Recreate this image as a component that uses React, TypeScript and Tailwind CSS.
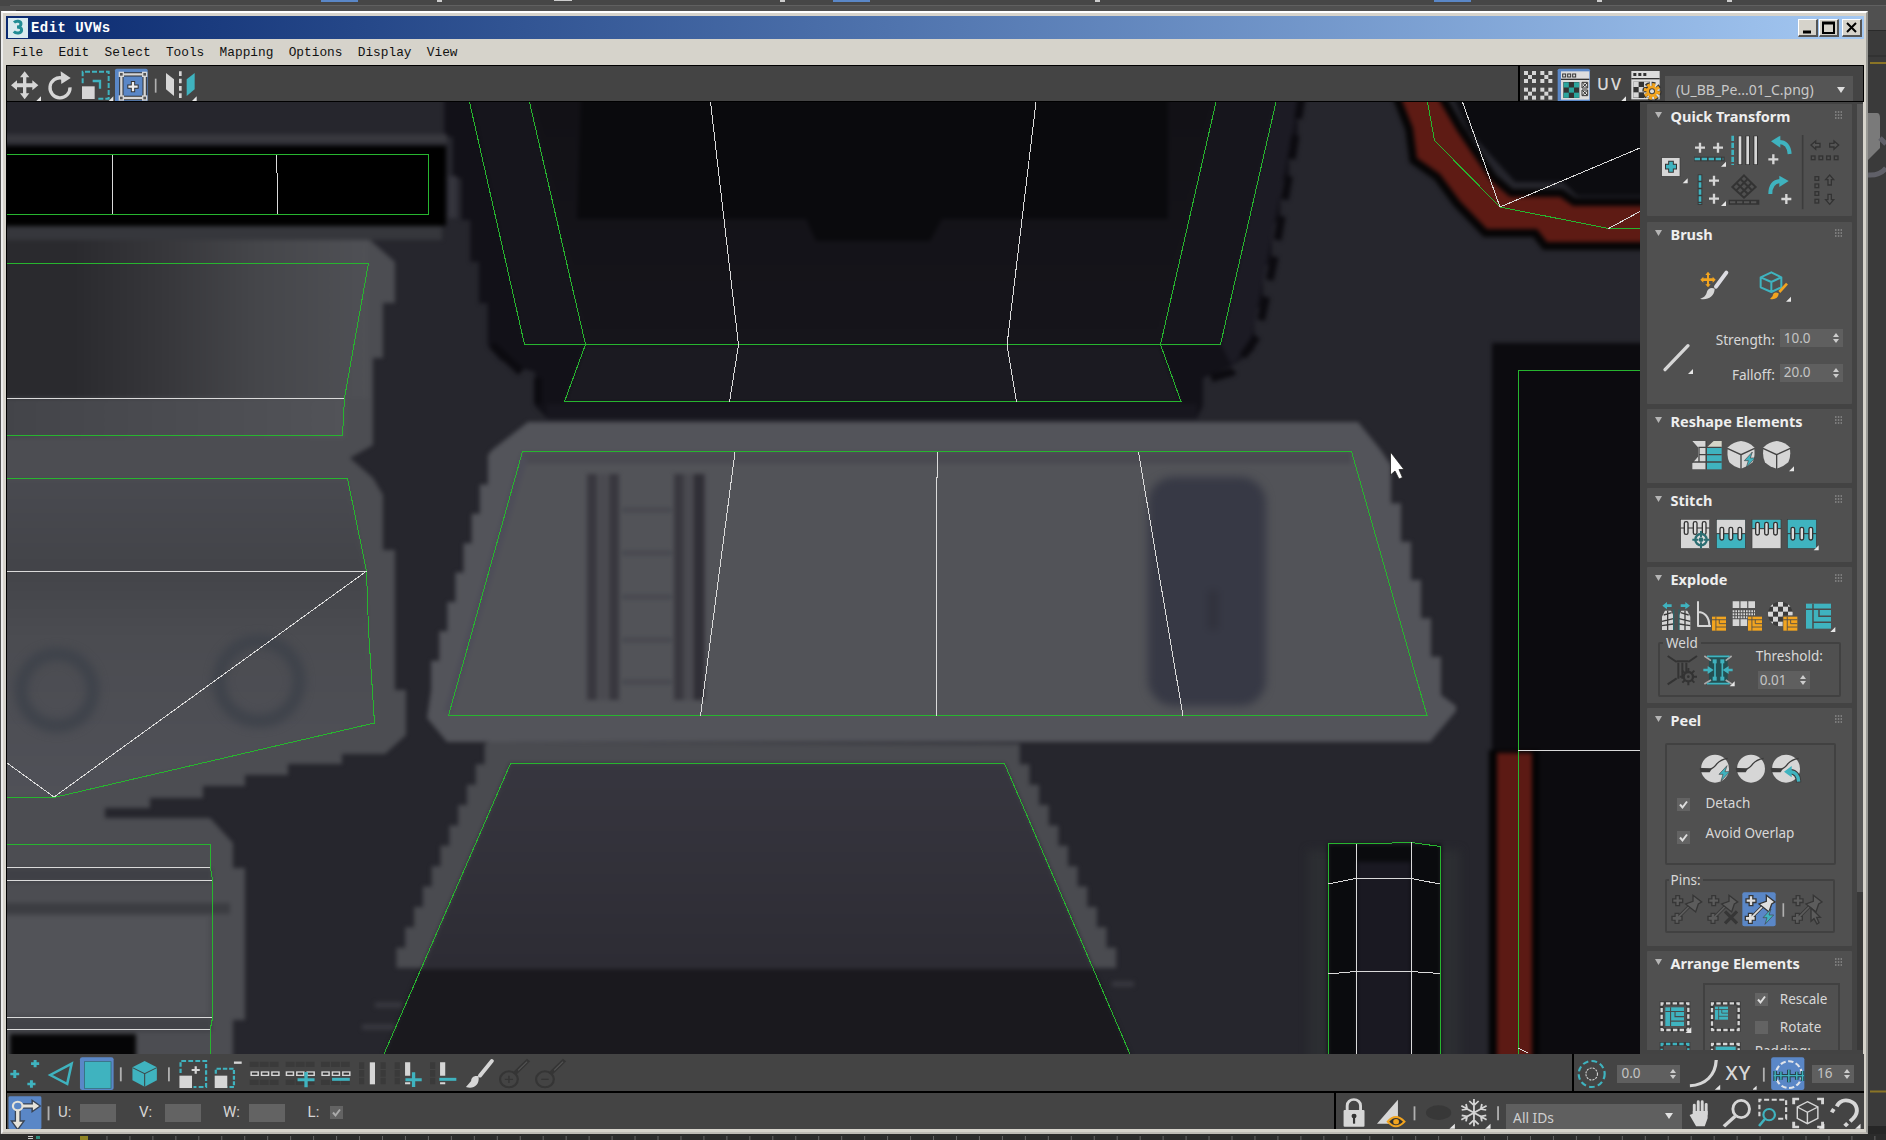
import React from "react";

type Kids = { children?: React.ReactNode };

const W = "#d6d6d6";
const TEAL = "#3fb3bf";
const ORANGE = "#f2a41f";
const BLUE = "#5a87c7";
const DARK = "#353535";

/* ---------- icon primitives ---------- */

type TileProps = Kids & { x: number; y: number; w: number; h: number; sx?: number };

/** Icon cell: draws a window of a 3x icon sheet at its natural size. */
function Tile({ x, y, w, h, sx = 3, children }: TileProps) {
  return (
    <svg
      className="block shrink-0"
      width={w / sx}
      height={h / 3}
      viewBox={`${x} ${y} ${w} ${h}`}
      preserveAspectRatio="none"
      fill="none"
    >
      {children}
    </svg>
  );
}

function Plus({ x, y, r = 15, t = 7, c = W }: { x: number; y: number; r?: number; t?: number; c?: string }) {
  return <path d={`M${x - r} ${y}H${x + r}M${x} ${y - r}V${y + r}`} stroke={c} strokeWidth={t} />;
}

/** Small flyout triangle; (x, y) is its bottom right corner. */
function Fly({ x, y, r = 15 }: { x: number; y: number; r?: number }) {
  return <path d={`M${x} ${y}H${x - r}L${x} ${y - r}Z`} fill="#e6e6e6" />;
}

function Sep({ x, y, h = 42 }: { x: number; y: number; h?: number }) {
  return <path d={`M${x} ${y}v${h}`} stroke="#b0b0b0" strokeWidth="5" />;
}

function Checker({ x, y, s, c = W }: { x: number; y: number; s: number; c?: string }) {
  const cells = [0, 2, 4, 6, 8];
  return (
    <g fill={c}>
      {cells.map((n) => (
        <rect key={n} x={x + (n % 3) * s} y={y + Math.floor(n / 3) * s} width={s} height={s} />
      ))}
    </g>
  );
}

function Bolt({ x, y }: { x: number; y: number }) {
  return <path d={`M${x + 24} ${y}L${x} ${y + 26}H${x + 12}L${x + 6} ${y + 46}L${x + 32} ${y + 18}H${x + 18}Z`} fill={TEAL} stroke="#444" strokeWidth="2" />;
}

function Maze({ x, y, s, c }: { x: number; y: number; s: number; c: string }) {
  return (
    <g>
      <rect x={x} y={y} width={s} height={s} fill={c} />
      <path
        d={`M${x + s * 0.28} ${y}V${y + s}M${x} ${y + s * 0.22}H${x + s}M${x + s * 0.28} ${y + s * 0.74}H${x + s}M${x + s * 0.52} ${y + s * 0.22}V${y + s * 0.5}H${x + s}`}
        stroke="#4a4a4a"
        strokeWidth={s * 0.06}
      />
    </g>
  );
}

/* ---------- window chrome ---------- */

function TitleButton({ children }: Kids) {
  return (
    <div className="h-[18px] w-[20px] shrink-0 border-t border-l border-r-2 border-b-2 border-t-white border-l-white border-r-[#555] border-b-[#555] bg-[#d6d3cb]">
      <svg className="block" width="17" height="15" viewBox="0 0 17 15" fill="none" stroke="#000" strokeWidth="2">
        {children}
      </svg>
    </div>
  );
}

function TitleBar() {
  return (
    <div className="flex h-[23px] shrink-0 items-center bg-linear-to-r from-[#0b2a70] to-[#a4c8f2] pr-[2px] pl-[2px]">
      <svg className="shrink-0" width="20" height="20" viewBox="0 0 20 20" fill="none">
        <rect width="20" height="20" fill="#d9eaee" />
        <path d="M6 4.500C8 2.600 13 2.800 13 6C13 8.600 10 9 9 9C10.500 9 13.600 9.500 13.600 12C13.600 15.500 8 15.800 5.800 13.500" stroke="#218c94" strokeWidth="3" />
      </svg>
      <span className="mt-[2px] ml-[3px] font-['Liberation_Mono',monospace] text-[14px] font-bold tracking-[0.45px] whitespace-pre text-white">Edit UVWs</span>
      <div className="ml-auto flex">
        <TitleButton><path d="M4 12H12" strokeWidth="3" /></TitleButton>
        <div className="ml-px flex">
          <TitleButton><path d="M3 2.500H14V13H3ZM3 3.500H14" /></TitleButton>
        </div>
        <div className="ml-[3px] flex">
          <TitleButton><path d="M4 3L13 12M13 3L4 12" /></TitleButton>
        </div>
      </div>
    </div>
  );
}

const MENUS = ["File", "Edit", "Select", "Tools", "Mapping", "Options", "Display", "View"];

function MenuBar() {
  return (
    <div className="flex h-[26px] shrink-0 items-center gap-[15.300px] bg-[#d6d3cb] pt-[2px] pl-[6.500px] font-['Liberation_Mono',monospace] text-[12.800px] text-[#111]">
      {MENUS.map((m) => (
        <span key={m}>{m}</span>
      ))}
    </div>
  );
}

function TopToolbar() {
  return (
    <div className="flex h-[37px] shrink-0 overflow-hidden border border-black bg-[#444]">
      <div className="-mt-px -ml-px flex">
        <Tile x={18} y={195} w={114} h={111}>
          <path d="M74 214l14 18h-9v18h18v-9l18 15l-18 15v-9h-18v18h9l-14 18l-14-18h9v-18h-18v9l-18-15l18-15v9h18v-18h-9z" fill={W} />
          <Fly x={123} y={304} />
        </Tile>
        <Tile x={132} y={195} w={102} h={111}>
          <path d="M186 234A30 30 0 1 0 210 262" stroke={W} strokeWidth="10" />
          <path d="M182 214L212 234L184 252Z" fill={W} />
        </Tile>
        <Tile x={234} y={195} w={108} h={111}>
          <path d="M248 250V215H326V296H290" stroke={TEAL} strokeWidth="6" strokeDasharray="15 6" />
          <path d="M278 243H300V266" stroke={TEAL} strokeWidth="7" />
          <rect x="246" y="259" width="38" height="38" fill={W} />
          <Fly x={340} y={304} />
        </Tile>
        <Tile x={342} y={195} w={108} h={111}>
          <rect x="345" y="206" width="98" height="100" rx="5" fill={BLUE} />
          <path d="M364 223H434V294H364Z" stroke="#333" strokeWidth="13" />
          <path d="M364 223H434V294H364Z" stroke={W} strokeWidth="7" />
          {[[364, 223], [434, 223], [364, 294], [434, 294]].map(([a, b]) => (
            <rect key={`${a}-${b}`} x={a - 6} y={b - 6} width="12" height="12" fill="#555" stroke={W} strokeWidth="4" />
          ))}
          <Plus x={399} y={260} r={17} t={13} c="#333" />
          <Plus x={399} y={260} r={14} t={7} c="#eee" />
        </Tile>
        <Tile x={450} y={195} w={36} h={111}><Sep x={467} y={236} /></Tile>
        <Tile x={486} y={195} w={120} h={111}>
          <path d="M498 219L522 238V288L498 268Z" fill={W} />
          <path d="M541 214V298" stroke={W} strokeWidth="8" strokeDasharray="14 8" />
          <path d="M584 219L560 238V288L584 268Z" fill={TEAL} />
          <Fly x={590} y={304} />
        </Tile>
      </div>
      <div className="-mt-px -mr-px ml-auto flex items-start">
        <div className="mt-px h-[36px] w-[2px] bg-black" />
        <Tile x={63} y={195} w={108} h={111}>
          {[[75, 213], [124, 213], [75, 263], [124, 263]].map(([a, b]) => (
            <Checker key={`${a}-${b}`} x={a} y={b} s={12} />
          ))}
        </Tile>
        <Tile x={171} y={195} w={114} h={111}>
          <rect x="176" y="206" width="97" height="100" rx="5" fill={BLUE} />
          <rect x="186" y="214" width="85" height="85" fill="#ddd" />
          <path d="M186 238H271" stroke="#333" strokeWidth="4" />
          {[191, 206, 221].map((n) => <rect key={n} x={n} y="222" width="9" height="9" stroke="#333" strokeWidth="3" />)}
          <rect x="193" y="246" width="48" height="48" fill="#333" />
          <Checker x={194} y={247} s={15.500} c="#2ba59d" />
          <path d="M249 247h17v17h-17zM249 270h17v17h-17zM251 249l13 13M264 249l-13 13M251 272l13 13M264 272l-13 13" stroke="#333" strokeWidth="3" />
        </Tile>
        <div className="flex h-[37px] w-[27px] items-start pt-[8px] pl-[3px] font-['Open_Sans',sans-serif] text-[16px] leading-[22px] font-semibold tracking-[2px] text-[#d8d8d8]">UV</div>
        <Tile x={366} y={195} w={24} h={111}><Fly x={381} y={304} /></Tile>
        <Tile x={390} y={195} w={108} h={111}>
          <rect x="397" y="213" width="85" height="85" fill="#ddd" />
          <path d="M397 236H482" stroke="#333" strokeWidth="4" />
          {[403, 418, 433].map((n) => <rect key={n} x={n} y="219" width="9" height="9" fill="#333" />)}
          <rect x="403" y="245" width="50" height="49" fill="#333" />
          <Checker x={403} y={245} s={16} />
          <circle cx="459" cy="274" r="22" stroke="#333" strokeWidth="14" strokeDasharray="10 7" />
          <circle cx="459" cy="274" r="20" stroke={ORANGE} strokeWidth="10" strokeDasharray="9 6.700" />
          <circle cx="459" cy="274" r="13" fill="#444" stroke={ORANGE} strokeWidth="8" />
          <circle cx="459" cy="274" r="6" fill="#ddd" />
        </Tile>
        <div className="mt-[11px] flex h-[25px] w-[188px] items-center justify-between bg-[#555] pt-[2px] pr-[8px] pl-[11px] text-[#c9c9c9]">
          <span className="text-[14px] leading-none">(U_BB_Pe...01_C.png)</span>
          <svg width="8" height="8" viewBox="0 0 8 8"><path d="M0 1H8L4 7Z" fill="#ddd" /></svg>
        </div>
        <div className="w-[11px]" />
      </div>
    </div>
  );
}

/* ---------- UV canvas ---------- */

/** Stair-stepped run between two points, quantised like enlarged texels. */
function stairs(x1: number, y1: number, x2: number, y2: number, n: number) {
  let d = "";
  for (let i = 0; i < n; i++) {
    const a = x1 + ((x2 - x1) * (i + 0.5)) / n;
    d += `L${a} ${y1 + ((y2 - y1) * i) / n}L${a} ${y1 + ((y2 - y1) * (i + 1)) / n}`;
  }
  return d;
}

const PLATE =
  "M528 422L492 450" + stairs(492, 455, 427, 690, 8) + "L427 718L447 742H1430L1456 711V706L1448 700" + stairs(1446, 695, 1386, 465, 6) + "L1380 449L1358 422Z";
const LOWER = "M489 742" + stairs(489, 744, 392, 968, 11) + "H1120" + stairs(1121, 968, 1015, 744, 11) + "Z";
const UPPER =
  "M440 95" + stairs(440, 95, 492, 345, 6) + "L500 360L521 368L535 372V406L547 418H1197L1203 406V378L1232 366" + stairs(1250, 350, 1302, 95, 6) + "Z";
const LEFT =
  "M0 240H370L395 262V303H383V358H373V445L350 458L373 478L383 495V550H395V690H406V735L385 754H342V764H288V775H245V786H203V798H150V808H105V818H210L233 843V868H245V1020H233V1060H0Z";

const GREEN = [
  "M7 154.500H428.500V214.500H7",
  "M7 263H368.500L344.500 398L342.500 435.500H7",
  "M7 478.500H347.500L366.500 571L368.500 630L374.500 723L54 797.500H7",
  "M7 844.500H210.500V868L212.500 880V1018L210.500 1028V1054",
  "M469.500 102L524.500 344.500H1220.500L1276 102",
  "M529.500 102L585.500 344.500L564.500 401.500H1181L1160.500 344.500L1216 102",
  "M522.500 451.500H1351.500L1427 715.500H448.500Z",
  "M384 1054L510.500 763.500H1004.500L1130 1054",
  "M1427.500 102L1434.500 140.500L1500 207L1608.500 228.500H1640",
  "M1640 370.500H1518.500V1054",
  "M1328.500 1054V843.500H1373L1411 842.500L1440.500 846.500V1054",
];

const WHITE = [
  "M112.500 155V214M276.500 155V173M277.500 173V214",
  "M7 398.500H344",
  "M7 571.500H366L54 797L7 763",
  "M7 867.500H210M7 880.500H212M7 1017.500H212M7 1029.500H210",
  "M710.500 102L738.500 345L729.500 402M1036 102L1007 345L1016.500 402",
  "M735 452L700.500 716M937.500 452V475L936.500 480V716M1138.500 452L1183 716",
  "M1462.500 102L1500 207L1640 148M1608.500 228.500L1640 211.500",
  "M1518 750.500H1640M1518 1048L1528 1053",
  "M1356.500 844V1054M1411.500 842V1054M1328 884L1356 878.500H1411L1440 884M1328 974L1356 971.500H1411L1440 973.500",
];

const RED_OUTER = "M1400 95L1413 128L1417 158L1440 174L1460 201L1487 229H1537L1547 242H1660V206H1573L1560 197H1510L1490 180L1457 131L1436 95Z";

function UvCanvas() {
  return (
    <svg className="block shrink-0" width="1633" height="952" viewBox="7 102 1633 952" fill="none">
      <defs>
        <filter id="soft" x="-5%" y="-5%" width="110%" height="110%" colorInterpolationFilters="sRGB"><feGaussianBlur stdDeviation="2.200" /></filter>
        <filter id="haze" x="-20%" y="-20%" width="140%" height="140%" colorInterpolationFilters="sRGB"><feGaussianBlur stdDeviation="4" /></filter>
        <linearGradient id="leftTop" x1="0" x2="1"><stop offset="0.2" stopColor="#2a2a2e" /><stop offset="0.45" stopColor="#37373b" /><stop offset="0.7" stopColor="#45464a" /><stop offset="1" stopColor="#4f5055" /></linearGradient>
        <linearGradient id="leftStrip" x1="0" x2="1"><stop offset="0" stopColor="#434449" /><stop offset="1" stopColor="#525358" /></linearGradient>
        <linearGradient id="leftMid" x1="0" x2="0" y1="0" y2="1"><stop offset="0" stopColor="#494a50" /><stop offset="0.28" stopColor="#434449" /><stop offset="0.5" stopColor="#4b4c51" /><stop offset="1" stopColor="#505158" /></linearGradient>
        <linearGradient id="trap" x1="0" x2="0" y1="0" y2="1"><stop offset="0" stopColor="#37363f" /><stop offset="1" stopColor="#2d2c34" /></linearGradient>
        <linearGradient id="dark" x1="0" x2="0" y1="0" y2="1"><stop offset="0" stopColor="#121116" /><stop offset="1" stopColor="#16151b" /></linearGradient>
      </defs>
      <rect x="7" y="102" width="1633" height="952" fill="#26262d" />

      <g filter="url(#soft)">
        <path d={UPPER} fill="#121118" />
        <path d="M1276 95L1221 345L1232 366L1250 345L1300 95Z" fill="#1c1b24" />
        <path d="M471 95L524 345H1220L1276 95Z" fill="#16151c" />
        <path d="M530 95L585 345H1160L1216 95Z" fill="url(#dark)" />
        <path d="M581 95H1168V219H942L930 241H816L806 219H577Z" fill="#0a0a0d" />
        <path d="M585 346H1160L1181 402H565Z" fill="#1b1a21" />
        <path d="M547 404H1197V419H547Z" fill="#17161e" />
        <path d="M1302 95L1290 170L1274 260L1258 335L1232 372L1205 380" stroke="#0c0b10" strokeWidth="8" strokeDasharray="24 17" />
        <path d="M492 345L521 372M538 378V404" stroke="#0c0b10" strokeWidth="8" />

        <path d={LEFT} fill="#4c4d52" />
        <rect x="0" y="240" width="368" height="158" fill="url(#leftTop)" />
        <rect x="0" y="398" width="345" height="40" fill="url(#leftStrip)" />
        <path d="M0 479H348L366 572L374 723L54 797H0Z" fill="url(#leftMid)" />
        <rect x="0" y="134" width="447" height="9" fill="#38383e" />
        <rect x="0" y="226" width="442" height="14" fill="#36373c" />
        <rect x="0" y="146" width="446" height="80" fill="#000" />
        <rect x="448" y="176" width="9" height="42" fill="#35353d" />
        <rect x="0" y="868" width="212" height="14" fill="#3f4046" />
        <rect x="0" y="903" width="230" height="11" fill="#3c3d42" />
        <rect x="0" y="917" width="208" height="98" fill="#525358" />
        <rect x="0" y="1018" width="212" height="14" fill="#414247" />
        <rect x="10" y="1034" width="126" height="30" fill="#050506" />
        <path d="M375 1005H402M362 1027H395M1112 984H1134" stroke="#37373e" strokeWidth="6" />
        <path d={LOWER} fill="#4a4b50" />
        <path d="M510 763H1005L1094 969H421Z" fill="url(#trap)" />
        <path d="M420 969H1094L1132 1060H382Z" fill="#1a191e" />

        <path d={PLATE} fill="#53545a" />
        <path d="M522 452H1351L1427 716H448Z" fill="#525358" />
        <path d="M522 458H1351" stroke="#4a4a51" strokeWidth="12" />
        <path d="M448 712L524 456" stroke="#4d4d58" strokeWidth="8" />
      </g>

      <g filter="url(#haze)">
        <circle cx="57" cy="690" r="36" stroke="#3f434b" strokeWidth="13" />
        <circle cx="259" cy="681" r="40" stroke="#3f434b" strokeWidth="13" />
        <rect x="1148" y="477" width="118" height="229" rx="26" fill="#373945" />
        <path d="M1213 590V630" stroke="#30313c" strokeWidth="10" />
        <rect x="1308" y="850" width="152" height="220" fill="#2c2e32" />
      </g>
      <g filter="url(#soft)">
        <path d="M592 474V700M614 474V700M679 474V700" stroke="#39383f" strokeWidth="10" />
        <path d="M699 474V700" stroke="#302f36" strokeWidth="11" />
        <path d="M603 474V700M688 474V700" stroke="#4a4a50" strokeWidth="9" />
        <path d="M622 510H672M622 553H672M622 597H672M622 640H672M622 682H672" stroke="#46474e" strokeWidth="4" />

        <path d={RED_OUTER} stroke="#060506" strokeWidth="16" fill="#5e1b14" />
        <path d="M1450 90L1468 130L1515 182H1563L1577 196H1660V90Z" fill="#0c0c10" />
        <path d={RED_OUTER} fill="#5e1b14" />
        <rect x="1492" y="343" width="170" height="730" fill="#0c0b0f" />
        <rect x="1489" y="750" width="50" height="330" fill="#030304" />
        <rect x="1497" y="753" width="35" height="320" fill="#5c1a14" />
        <rect x="1328" y="844" width="113" height="230" fill="#0a0b0e" />
        <rect x="1357" y="862" width="54" height="200" fill="#1a1922" />
      </g>

      <g stroke="#27b52f" strokeWidth="1" shapeRendering="crispEdges">
        {GREEN.map((d) => <path key={d} d={d} />)}
      </g>
      <g stroke="#dadada" strokeWidth="1" shapeRendering="crispEdges">
        {WHITE.map((d) => <path key={d} d={d} />)}
      </g>
      <path d="M1390.500 452V475L1395 471L1399 479L1402.500 477.500L1399 469.500H1404Z" fill="#fff" stroke="#222" strokeWidth="0.800" />
    </svg>
  );
}

/* ---------- side panel ---------- */

function Rollup({ title, className, children }: Kids & { title: string; className: string }) {
  return (
    <section className={`flex w-[205.300px] shrink-0 flex-col overflow-hidden rounded-[1px] bg-[#505050] ${className}`}>
      <header className="flex h-[26px] shrink-0 items-center pr-[10px] pb-[2px] pl-[8px]">
        <svg className="mb-[2px]" width="7" height="6" viewBox="0 0 7 6"><path d="M0 0H7L3.500 6Z" fill="#b5b5b5" /></svg>
        <h2 className="ml-[9px] text-[14.500px] leading-none font-bold whitespace-nowrap text-[#eee]">{title}</h2>
        <svg className="mb-[3px] ml-auto" width="8" height="8" viewBox="0 0 8 8">
          <path d="M1 1H8M1 4H8M1 7H8" stroke="#8a8a8a" strokeWidth="1.500" strokeDasharray="1.500 1.300" />
        </svg>
      </header>
      {children}
    </section>
  );
}

function Spinner({ value, className }: { value: string; className: string }) {
  return (
    <div className={`flex h-[18px] shrink-0 items-center justify-between bg-[#5f5f5f] pr-[4px] text-[13.500px] leading-none text-[#c4c4c4] ${className}`}>
      <span>{value}</span>
      <svg width="6" height="12" viewBox="0 0 6 12"><path d="M0 5L3 1L6 5ZM0 7L3 11L6 7Z" fill="#ccc" /></svg>
    </div>
  );
}

function Check({ on = true, dim = false }: { on?: boolean; dim?: boolean }) {
  return (
    <svg className="shrink-0" width="13" height="13" viewBox="0 0 13 13" fill="none">
      <rect width="13" height="13" fill="#636363" />
      {on && <path d="M3 6.500L5.500 9.500L10 3.500" stroke={dim ? "#aaa" : "#ddd"} strokeWidth="2" />}
    </svg>
  );
}

function QuickTransform() {
  return (
    <Rollup title="Quick Transform" className="h-[112px]">
      <div className="flex">
        <Tile x={32} y={90} w={133} h={258}>
          <rect x="76" y="173" width="55" height="56" fill={W} stroke="#383838" strokeWidth="2" />
          <Plus x={104} y={200} r={18} t={17} c="#333" />
          <Plus x={104} y={200} r={15} t={11} c={TEAL} />
          <Fly x={154} y={250} />
        </Tile>
        <div>
          <Tile x={165} y={90} w={110} h={120}>
            <Plus x={192} y={143} /><Plus x={246} y={143} />
            <rect x="174" y="170" width="92" height="14" fill="#3a3a3a" />
            <path d="M176 177H262" stroke={TEAL} strokeWidth="8" strokeDasharray="16 5" />
            <Fly x={270} y={200} />
          </Tile>
          <Tile x={165} y={210} w={110} h={138}>
            <rect x="185" y="223" width="14" height="92" fill="#3a3a3a" />
            <path d="M192 226V312" stroke={TEAL} strokeWidth="8" strokeDasharray="16 5" />
            <Plus x={234} y={242} /><Plus x={234} y={296} />
            <Fly x={270} y={318} />
          </Tile>
        </div>
        <div>
          <Tile x={275} y={90} w={110} h={120}>
            <path d="M314 107V195M337 107V195M361 107V195" stroke="#333" strokeWidth="14" />
            <path d="M292 107V195" stroke={TEAL} strokeWidth="8" strokeDasharray="16 5" />
            <path d="M314 109V193M337 109V193M361 109V193" stroke={W} strokeWidth="8" />
          </Tile>
          <Tile x={275} y={210} w={110} h={138}>
            <path d="M326 226L361 261L326 293L291 261ZM315 237L350 271M303 248L338 282M337 237L303 271M349 249L315 282" stroke="#333" strokeWidth="6" />
            <path d="M280 307H372" stroke="#333" strokeWidth="15" />
            <path d="M284 307H368" stroke="#555" strokeWidth="6" strokeDasharray="16 5" />
          </Tile>
        </div>
        <div>
          <Tile x={385} y={90} w={105} h={120}>
            <path d="M462 162C460 138 448 126 430 126" stroke={TEAL} strokeWidth="12" />
            <path d="M406 124L434 107V143Z" fill={TEAL} />
            <Plus x={413} y={178} />
          </Tile>
          <Tile x={385} y={210} w={105} h={138}>
            <path d="M404 282C404 256 416 244 436 243" stroke={TEAL} strokeWidth="12" />
            <path d="M459 243L431 227V261Z" fill={TEAL} />
            <Plus x={452} y={297} />
          </Tile>
        </div>
        <Tile x={490} y={90} w={30} h={258}><path d="M501 105V328" stroke="#3c3c3c" strokeWidth="5" /></Tile>
        <div>
          <Tile x={520} y={90} w={110} h={120}>
            <path d="M526 135L540 123V130H553V141H540V148ZM609 135L595 123V130H582V141H595V148Z" fill="#555" stroke="#333" strokeWidth="4" />
            {[527, 550, 573, 596].map((n) => <rect key={n} x={n} y="168" width="11" height="11" stroke="#333" strokeWidth="4" />)}
          </Tile>
          <Tile x={520} y={210} w={110} h={138}>
            {[230, 252, 275, 298].map((n) => <rect key={n} x="538" y={n} width="11" height="11" stroke="#333" strokeWidth="4" />)}
            <path d="M582 225L594 239H587V255H577V239H570ZM582 313L594 299H587V283H577V299H570Z" fill="#555" stroke="#333" strokeWidth="4" />
          </Tile>
        </div>
      </div>
    </Rollup>
  );
}

function Brush() {
  return (
    <Rollup title="Brush" className="mt-[6px] h-[182px]">
      <div className="flex pl-[49px]">
        <Tile x={180} y={444} w={150} h={196}>
          <path d="M216 515l8 10h-5v10h11v-5l9 9l-9 9v-5h-11v10h5l-8 9l-8-9h5v-10h-11v5l-9-9l9-9v5h11v-10h-5z" fill={ORANGE} />
          <path d="M271 518L240 560" stroke="#dcdce2" strokeWidth="12" strokeLinecap="round" />
          <path d="M236 566C226 560 214 566 212 578C208 590 200 594 192 596C212 602 236 590 236 566Z" fill={W} />
        </Tile>
        <Tile x={330} y={444} w={150} h={196}>
          <path d="M406 517L436 532V562L406 576L374 562V532ZM374 532L406 546L436 532M406 546V576" stroke={TEAL} strokeWidth="6" strokeLinejoin="round" />
          <path d="M453 551L430 576" stroke={ORANGE} strokeWidth="8" />
          <path d="M428 580C418 574 410 580 410 588L402 597C416 600 428 594 428 580Z" fill={ORANGE} />
          <Fly x={465} y={605} />
        </Tile>
      </div>
      <div className="flex">
        <Tile x={32} y={640} w={148} h={270}>
          <path d="M86 810L155 738" stroke={W} strokeWidth="10" strokeLinecap="round" />
          <Fly x={170} y={823} />
        </Tile>
        <div className="flex flex-1 flex-col gap-[16.500px] pt-[16px] pr-[9px]">
          <div className="flex items-center justify-end text-[13.600px] leading-none text-[#d8d8d8]">
            <span className="pt-[3px]">Strength:</span><Spinner value="10.0" className="ml-[5px] w-[63px] pl-[4px]" />
          </div>
          <div className="flex items-center justify-end text-[13.600px] leading-none text-[#d8d8d8]">
            <span className="pt-[3px]">Falloff:</span><Spinner value="20.0" className="ml-[5px] w-[63px] pl-[4px]" />
          </div>
        </div>
      </div>
    </Rollup>
  );
}

function Cube({ x, y }: { x: number; y: number }) {
  return (
    <g>
      <path d={`M${x + 41} ${y}Q${x + 65} ${y + 2} ${x + 80} ${y + 19}Q${x + 85} ${y + 45} ${x + 76} ${y + 64}Q${x + 60} ${y + 78} ${x + 41} ${y + 83}Q${x + 20} ${y + 78} ${x + 6} ${y + 64}Q${x - 3} ${y + 45} ${x + 2} ${y + 19}Q${x + 18} ${y + 2} ${x + 41} ${y}Z`} fill={W} />
      <path d={`M${x} ${y + 22}L${x + 41} ${y + 41}L${x + 82} ${y + 22}M${x + 41} ${y + 41}V${y + 84}`} stroke="#444" strokeWidth="4" />
    </g>
  );
}

function Reshape() {
  return (
    <Rollup title="Reshape Elements" className="mt-[5px] h-[74px]">
      <div className="flex pl-[43px]">
        <Tile x={161} y={105} w={107} h={143}>
          <path d="M168 123H208V208H168V190L185 170V142Z" fill={W} />
          <path d="M212 142L232 123H256V142Z" fill="#d6d6c8" />
          <rect x="212" y="142" width="44" height="66" fill={TEAL} />
          <path d="M186 142H256M186 164H256M168 186H256M188 142V186M210 123V208" stroke="#444" strokeWidth="4" />
        </Tile>
        <Tile x={268} y={105} w={105} h={143}><Cube x={275} y={123} /><Bolt x={326} y={156} /></Tile>
        <Tile x={373} y={105} w={110} h={143}><Cube x={382} y={123} /><Fly x={475} y={214} /></Tile>
      </div>
    </Rollup>
  );
}

function Stitches({ x, y, top, bottom, line }: { x: number; y: number; top: string; bottom: string; line: number }) {
  return (
    <g>
      <rect x={x} y={y} width="87" height="88" fill={bottom} />
      <rect x={x} y={y} width="87" height={line} fill={top} />
      <path d={`M${x} ${y + line}H${x + 87}`} stroke="#333" strokeWidth="3" />
      {[16, 43, 70].map((n) => (
        <rect key={n} x={x + n - 5} y={y + line - 19} width="11" height="38" rx="5" fill="#ddd" stroke="#333" strokeWidth="4" />
      ))}
      <rect x={x} y={y} width="87" height="88" stroke="#3a3a3a" strokeWidth="2" />
    </g>
  );
}

function Stitch() {
  return (
    <Rollup title="Stitch" className="mt-[5.300px] h-[74px]">
      <div className="flex pl-[31px]">
        <Tile x={125} y={343} w={108} h={144}>
          <Stitches x={133} y={359} top={W} bottom={W} line={26} />
          <circle cx="194" cy="420" r="17" fill="#ddd" stroke="#2b6e72" strokeWidth="7" />
          <path d="M194 394V412M194 428V446M168 420H186M202 420H220" stroke="#2b6e72" strokeWidth="6" />
          <circle cx="194" cy="420" r="7" fill="#2b6e72" />
        </Tile>
        <Tile x={233} y={343} w={108} h={144}><Stitches x={240} y={359} top={W} bottom={TEAL} line={43} /></Tile>
        <Tile x={341} y={343} w={107} h={144}><Stitches x={347} y={359} top={TEAL} bottom={W} line={28} /></Tile>
        <Tile x={448} y={343} w={110} h={144}><Stitches x={455} y={359} top={TEAL} bottom={TEAL} line={43} /><Fly x={549} y={452} /></Tile>
      </div>
    </Rollup>
  );
}

function Explode() {
  return (
    <Rollup title="Explode" className="mt-[5px] h-[136px]">
      <div className="flex">
        <Tile x={32} y={579} w={140} h={126}>
          <path d="M78 617L92 606V613H106V621H92V628ZM161 617L147 606V613H133V621H147V628Z" fill={TEAL} />
          <path d="M77 690V650L86 632H104L111 646V690ZM162 690V650L153 632H135L128 646V690Z" fill={W} />
          <path d="M77 664L111 656M77 677L111 672M82 645L106 638M162 664L128 656M162 677L128 672M157 645L133 638M94 632V690M146 632V690" stroke="#3c3c3c" strokeWidth="4" />
          <path d="M112 628V690M128 628V690" stroke="#2a6468" strokeWidth="4" />
        </Tile>
        <Tile x={172} y={579} w={108} h={126}>
          <path d="M187 604V680M187 678H226M187 636C206 636 221 650 221 678" stroke={W} strokeWidth="6" />
          <Maze x={229} y={650} s={42} c={ORANGE} />
        </Tile>
        <Tile x={280} y={579} w={108} h={126}>
          <path d="M291 614H358M291 668H335" stroke={W} strokeWidth="20" strokeDasharray="20 3.500" />
          <path d="M291 634H358M291 643H358M291 652H335" stroke={W} strokeWidth="6" strokeDasharray="5 3" />
          <Maze x={337} y={650} s={42} c={ORANGE} />
        </Tile>
        <Tile x={388} y={579} w={108} h={126}>
          <clipPath id="ball"><circle cx="434" cy="642" r="37" /></clipPath>
          <circle cx="434" cy="642" r="37" fill="#3a3a3a" />
          <g clipPath="url(#ball)" fill={W}>
            {[0, 1, 2, 3, 4].flatMap((r) => [0, 1, 2, 3, 4].filter((c) => (r + c) % 2 === 0).map((c) => <rect key={`${r}${c}`} x={397 + c * 15} y={605 + r * 15} width="15" height="15" />))}
          </g>
          <rect x="441" y="646" width="60" height="60" fill="#505050" />
          <Maze x={443} y={650} s={42} c={ORANGE} />
        </Tile>
        <Tile x={496} y={579} w={110} h={126}><Maze x={511} y={611} s={75} c={TEAL} /><Fly x={599} y={696} /></Tile>
      </div>
      <div className="relative mt-[6.700px] ml-[11.500px] flex h-[55px] w-[183px] rounded-[2px] border-2 border-[#414141]">
        <span className="absolute -top-[9px] left-[3px] bg-[#505050] px-[3px] text-[13.500px] leading-[16px] text-[#d8d8d8]">Weld</span>
        <div className="-mt-px flex pl-[5px]">
          <Tile x={90} y={731} w={108} h={150}>
            <path d="M98 770L125 788M186 770L160 788M98 855L125 837M125 786H160M130 838V790M154 790V838M142 790V838" stroke="#333" strokeWidth="6" />
            <path d="M160 806V858M134 832H186M142 814L178 850M178 814L142 850" stroke="#333" strokeWidth="6" />
            <circle cx="160" cy="832" r="14" fill="#505050" stroke="#333" strokeWidth="7" />
            <circle cx="160" cy="832" r="4" fill="#333" />
          </Tile>
          <Tile x={198} y={731} w={110} h={150}>
            <rect x="222" y="768" width="56" height="88" fill="#244f52" />
            <path d="M208 770L228 784M290 770L272 784M208 854L228 842M290 854L272 842" stroke="#aaa" strokeWidth="5" />
            <path d="M216 771H284M216 853H284M240 790V835M262 790V835" stroke={TEAL} strokeWidth="5" />
            <path d="M205 812H222M293 812H278" stroke={TEAL} strokeWidth="7" />
            <path d="M218 800L236 812L218 824ZM281 800L263 812L281 824Z" fill={TEAL} />
            <rect x="233" y="780" width="12" height="12" fill={TEAL} /><rect x="256" y="780" width="12" height="12" fill={TEAL} />
            <rect x="233" y="832" width="12" height="12" fill={TEAL} /><rect x="256" y="832" width="12" height="12" fill={TEAL} />
            <Fly x={299} y={861} />
          </Tile>
        </div>
        <div className="ml-[18px] pt-[6px] text-[13.500px] leading-none text-[#d8d8d8]">
          <div className="whitespace-nowrap">Threshold:</div>
          <div className="mt-[8px]"><Spinner value="0.01" className="ml-[2px] w-[52px] pl-[2px]" /></div>
        </div>
      </div>
    </Rollup>
  );
}

function PeelBall({ x }: { x: number }) {
  return (
    <g>
      <circle cx={x} cy="207" r="42" fill={W} />
      <path d={`M${x - 46} 208H${x - 14}Q${x - 4} 206 ${x + 6} 192Q${x + 16} 180 ${x + 38} 176`} stroke="#3c3c3c" strokeWidth="4" />
      <path d={`M${x - 44} 204L${x - 10} 208L${x - 16} 218H${x - 44}Z`} fill="#3c3c3c" />
    </g>
  );
}

function Pin({ x, on = false }: { x: number; on?: boolean }) {
  const c = on ? "#e0e0e0" : "#5c5c5c";
  return (
    <g>
      <Plus x={x + 16} y={602} r={17} t={15} c="#363636" />
      <Plus x={x + 16} y={602} r={13} t={7} c={c} />
      <path d={`M${x + 8} 662L${x + 50} 620`} stroke="#363636" strokeWidth="10" />
      <Plus x={x + 14} y={655} r={17} t={15} c="#363636" />
      <Plus x={x + 14} y={655} r={13} t={8} c={c} />
      <path d={`M${x + 12} 658L${x + 50} 620`} stroke={c} strokeWidth="5" />
      <path d={`M${x + 62} 586L${x + 88} 606L${x + 78} 612L${x + 70} 636L${x + 40} 612L${x + 62} 604Z`} fill={c} stroke="#363636" strokeWidth="4" />
    </g>
  );
}

function Peel() {
  return (
    <Rollup title="Peel" className="mt-[5px] h-[238px]">
      <div className="mt-[9px] ml-[18px] flex h-[122px] w-[171.500px] shrink-0 flex-col rounded-[2px] border-2 border-[#414141]">
        <div className="flex pl-[32px]">
          <Tile x={186} y={136} w={108} h={130}><PeelBall x={234} /><Bolt x={246} y={198} /></Tile>
          <Tile x={294} y={136} w={107} h={130}><PeelBall x={342} /></Tile>
          <Tile x={401} y={136} w={108} h={130}>
            <PeelBall x={449} />
            <path d="M487 248C486 226 476 217 462 216" stroke="#3c3c3c" strokeWidth="16" />
            <path d="M487 246C486 226 476 217 462 216" stroke={TEAL} strokeWidth="10" />
            <path d="M443 216L466 199V233Z" fill={TEAL} />
          </Tile>
        </div>
        <div className="mt-[8px] flex h-[16px] items-center gap-[16px] pl-[10px] text-[13.500px] leading-none text-[#d8d8d8]">
          <Check /><span className="mb-[2px]">Detach</span>
        </div>
        <div className="mt-[17px] flex h-[16px] items-center gap-[16px] pl-[10px] text-[13.500px] leading-none text-[#d8d8d8]">
          <Check /><span className="mb-[7px]">Avoid Overlap</span>
        </div>
      </div>
      <div className="relative mt-[13.500px] ml-[18px] flex h-[54px] w-[170.500px] shrink-0 rounded-[2px] border-2 border-[#414141]">
        <span className="absolute -top-[9px] left-[2px] bg-[#505050] px-[2px] text-[13.500px] leading-[16px] text-[#d8d8d8]">Pins:</span>
        <Tile x={92} y={543} w={114} h={145}><Pin x={108} /></Tile>
        <Tile x={206} y={543} w={108} h={145}><Pin x={216} /><path d="M266 634L302 670M302 634L266 670" stroke="#363636" strokeWidth="10" /></Tile>
        <Tile x={314} y={543} w={108} h={145}><rect x="318" y="577" width="100" height="102" rx="6" fill={BLUE} /><Pin x={328} on /><Bolt x={380} y={627} /></Tile>
        <Tile x={422} y={543} w={36} h={145}><Sep x={441} y={610} h={40} /></Tile>
        <Tile x={458} y={543} w={114} h={145}><Pin x={469} /><path d="M524 624V664L533 656L542 672L548 668L541 652H552Z" fill="#5c5c5c" stroke="#363636" strokeWidth="4" /></Tile>
      </div>
    </Rollup>
  );
}

function Frame({ x, y, c = W }: { x: number; y: number; c?: string }) {
  return (
    <g>
      <rect x={x} y={y} width="80" height="80" stroke="#3a3a3a" strokeWidth="12" />
      <rect x={x} y={y} width="80" height="80" stroke={c} strokeWidth="7" strokeDasharray="13 7" strokeDashoffset="7" />
    </g>
  );
}

function Arrange() {
  return (
    <Rollup title="Arrange Elements" className="mt-[5px] h-[99px] rounded-b-none">
      <div className="flex">
        <div className="w-[56.700px]">
          <Tile x={32} y={831} w={170} h={180}>
            <Frame x={76} y={910} /><Maze x={87} y={922} s={56} c={TEAL} />
            <Fly x={165} y={999} r={17} />
          </Tile>
          <Tile x={32} y={1011} w={170} h={39}><Frame x={76} y={1032} c={TEAL} /></Tile>
        </div>
        <div className="mt-[6px] flex h-[80px] w-[136.500px] border-2 border-b-0 border-[#414141]">
          <div className="pl-[4px]">
            <Tile x={220} y={855} w={110} h={156}><Frame x={229} y={910} /><Maze x={238} y={920} s={39} c={TEAL} /></Tile>
            <Tile x={220} y={1011} w={110} h={39}><Frame x={229} y={1032} /><rect x="240" y="1040" width="60" height="20" fill={TEAL} /></Tile>
          </div>
          <div className="pt-[6.500px] pl-[9px] text-[13.500px] leading-none whitespace-nowrap text-[#d8d8d8]">
            <div className="flex h-[16px] items-center gap-[12px]"><Check /><span>Rescale</span></div>
            <div className="mt-[12px] flex h-[16px] items-center gap-[12px]"><Check on={false} /><span>Rotate</span></div>
            <div className="mt-[9px]">Padding:</div>
          </div>
        </div>
      </div>
    </Rollup>
  );
}

function SidePanel() {
  return (
    <aside className="flex h-[952px] w-[223px] shrink-0 overflow-hidden bg-[#434343] pt-[2px] pl-[6.500px]">
      <div className="flex flex-col">
        <QuickTransform />
        <Brush />
        <Reshape />
        <Stitch />
        <Explode />
        <Peel />
        <Arrange />
      </div>
      <div className="ml-[5px] h-[946px] w-[6px] bg-[#393939]"><div className="h-[788px] w-[6px] bg-[#585858]" /></div>
    </aside>
  );
}

/* ---------- bottom bars ---------- */

const A = 2.703;
const B = 2.77;

function FaintSlots({ x }: { x: number }) {
  return <path d={`M${x} 58H${x + 78}M${x} 112H${x + 78}`} stroke="#3a3a3a" strokeWidth="16" strokeDasharray="24 3" />;
}

function Dashes({ x }: { x: number }) {
  return (
    <g>
      {[0, 28, 56].map((n) => <rect key={n} x={x + n} y="81" width="19" height="10" fill="#333" stroke={W} strokeWidth="4" />)}
    </g>
  );
}

function SelectBar() {
  return (
    <div className="flex h-[37px] shrink-0 bg-[#444]">
      <Tile x={18} y={27} w={102} h={111} sx={A}>
        <Plus x={39} y={87} r={12} c={TEAL} t={8} /><Plus x={94} y={56} r={11} c={TEAL} t={8} /><Plus x={84} y={117} r={11} c={TEAL} t={8} />
      </Tile>
      <Tile x={120} y={27} w={86} h={111} sx={A}><path d="M134 90L192 56L180 117Z" stroke={TEAL} strokeWidth="7" /></Tile>
      <Tile x={206} y={27} w={106} h={111} sx={A}><rect x="214" y="37" width="91" height="98" rx="6" fill={BLUE} /><rect x="226" y="50" width="72" height="80" fill={TEAL} stroke="#32676f" strokeWidth="2" /></Tile>
      <Tile x={312} y={27} w={32} h={111} sx={A}><Sep x={325} y={67} /></Tile>
      <Tile x={344} y={27} w={96} h={111} sx={A}>
        <path d="M389 48L422 67V106L389 125L356 106V67Z" fill={TEAL} /><path d="M356 68L389 86L422 68M389 86V125" stroke="#3c4a4b" strokeWidth="3" />
      </Tile>
      <Tile x={440} y={27} w={32} h={111} sx={A}><Sep x={456} y={67} /></Tile>
      <Tile x={472} y={27} w={98} h={111} sx={A}>
        <path d="M487 84V48H556V126H522" stroke={TEAL} strokeWidth="6" strokeDasharray="13 6" />
        <rect x="484" y="92" width="34" height="37" fill={W} /><Plus x={528} y={75} r={11} t={6} />
      </Tile>
      <Tile x={570} y={27} w={94} h={111} sx={A}>
        <path d="M583 86V71H632V126H614" stroke={TEAL} strokeWidth="6" strokeDasharray="12 5" />
        <rect x="580" y="92" width="34" height="37" fill={W} /><path d="M632 53H653" stroke={W} strokeWidth="7" />
      </Tile>
      <Tile x={664} y={27} w={98} h={111} sx={A}><FaintSlots x={674} /><Dashes x={678} /></Tile>
      <Tile x={762} y={27} w={98} h={111} sx={A}><FaintSlots x={772} /><Dashes x={774} /><Plus x={827} y={104} r={23} t={9} c={TEAL} /></Tile>
      <Tile x={860} y={27} w={98} h={111} sx={A}><FaintSlots x={868} /><Dashes x={871} /><path d="M898 103H946" stroke={TEAL} strokeWidth="9" /></Tile>
      <Tile x={958} y={27} w={98} h={111} sx={A}>
        <path d="M976 52V120M1034 52V120" stroke="#3a3a3a" strokeWidth="14" strokeDasharray="20 3" /><path d="M1005 52V118" stroke={W} strokeWidth="14" />
      </Tile>
      <Tile x={1056} y={27} w={96} h={111} sx={A}>
        <path d="M1073 52V120" stroke="#3a3a3a" strokeWidth="14" strokeDasharray="20 3" /><path d="M1101 52V118" stroke={W} strokeWidth="14" strokeDasharray="40 20" />
        <Plus x={1117} y={104} r={22} t={9} c={TEAL} />
      </Tile>
      <Tile x={1152} y={27} w={98} h={111} sx={A}>
        <path d="M1170 52V120" stroke="#3a3a3a" strokeWidth="14" strokeDasharray="20 3" /><path d="M1197 52V118" stroke={W} strokeWidth="14" strokeDasharray="40 20" />
        <path d="M1188 103H1234" stroke={TEAL} strokeWidth="9" />
      </Tile>
      <Tile x={1250} y={27} w={90} h={111} sx={A}>
        <path d="M1328 48L1296 92" stroke={W} strokeWidth="11" strokeLinecap="round" /><path d="M1292 94C1280 90 1272 98 1272 108L1258 126C1276 134 1296 122 1292 94Z" fill={W} />
      </Tile>
      {[0, 97].map((o) => (
        <Tile key={o} x={1340 + o} y={27} w={97} h={111} sx={A}>
          <circle cx={1375 + o} cy="103" r="24" stroke={DARK} strokeWidth="6" />
          <path d={`M${1390 + o} 86L${1428 + o} 45`} stroke={DARK} strokeWidth="12" />
          <path d={`M${1400 + o} 76L${1424 + o} 50`} stroke="#555" strokeWidth="3" />
          <path d={o ? `M${1365 + o} 103H${1385 + o}` : `M1364 103H1386M1375 92V114`} stroke={DARK} strokeWidth="4" />
        </Tile>
      ))}
      <div className="ml-auto w-[2px] bg-black" />
      <Tile x={703} y={27} w={100} h={111} sx={B}>
        <ellipse cx="752" cy="87" rx="36" ry="39" stroke={TEAL} strokeWidth="6" strokeDasharray="16 9" />
        <ellipse cx="752" cy="87" rx="16" ry="18" stroke={W} strokeWidth="3" strokeDasharray="6 3" />
      </Tile>
      <div className="flex items-center pr-[7px] pl-[7px]"><Spinner value="0.0" className="mt-[3px] w-[63px] pl-[4px]" /></div>
      <Tile x={1018} y={27} w={100} h={111} sx={B}>
        <path d="M1026 122C1068 120 1097 92 1099 45" stroke={W} strokeWidth="9" /><Fly x={1110} y={134} />
      </Tile>
      <div className="w-[29px] pt-[7px] pl-[2px] text-[20px] leading-[24px] font-medium tracking-[1px] text-[#d8d8d8]">XY</div>
      <Tile x={1199} y={27} w={46} h={111} sx={B}><Fly x={1209} y={134} r={12} /><Sep x={1229} y={68} /></Tile>
      <Tile x={1245} y={27} w={105} h={111} sx={B}>
        <rect x="1251" y="37" width="92" height="98" rx="6" fill={BLUE} />
        <ellipse cx="1300" cy="89" rx="36" ry="40" stroke="#e0e4ea" strokeWidth="6" strokeDasharray="15 7" />
        <path d="M1258 92H1342M1262 78V108M1278 80V104M1300 74V112M1322 80V104M1338 78V108" stroke="#25434b" strokeWidth="10" />
        <path d="M1258 92H1342M1262 78V108M1278 80V104M1300 74V112M1322 80V104M1338 78V108" stroke={TEAL} strokeWidth="4" />
      </Tile>
      <div className="flex items-center pr-[10px] pl-[5px]"><Spinner value="16" className="mt-[3px] w-[42px] pl-[5px]" /></div>
    </div>
  );
}

function Coord({ label, className }: { label: string; className: string }) {
  return (
    <div className={`flex items-center justify-between ${className}`}>
      <span className="font-['Roboto',sans-serif] text-[15px] leading-none text-[#d5d5d5]">{label}</span>
      <div className="h-[18px] w-[36px] bg-[#636363]" />
    </div>
  );
}

function TransformBar() {
  return (
    <div className="flex h-[38px] shrink-0 border-t-2 border-black bg-[#444]">
      <Tile x={18} y={142} w={98} h={108} sx={A}>
        <rect x="22" y="152" width="89" height="98" rx="4" fill={BLUE} />
        <path d="M47 181V230M47 181H90" stroke="#3a4454" strokeWidth="16" />
        <path d="M108 181L86 164V198ZM47 252L30 226H64Z" fill="#e6e3da" stroke="#3a4454" strokeWidth="4" />
        <path d="M47 181V230M47 181H90" stroke="#e6e3da" strokeWidth="9" />
        <circle cx="47" cy="181" r="13" fill={BLUE} stroke="#e6e3da" strokeWidth="6" />
      </Tile>
      <Tile x={116} y={142} w={40} h={108} sx={A}><Sep x={131} y={182} /></Tile>
      <div className="flex items-center pt-[3px]">
        <Coord label="U:" className="w-[58px]" />
        <Coord label="V:" className="ml-[23px] w-[61.500px]" />
        <Coord label="W:" className="ml-[22.500px] w-[61.500px]" />
        <span className="ml-[23px] w-[22px] font-['Roboto',sans-serif] text-[15px] leading-none text-[#d5d5d5]">L:</span>
        <Check dim />
      </div>
      <div className="ml-auto w-[2px] bg-black" />
      <Tile x={45} y={142} w={100} h={108} sx={B}>
        <path d="M76 196V180A18 18 0 0 1 113 180V196" stroke={W} strokeWidth="8" /><rect x="66" y="193" width="58" height="50" rx="3" fill={W} />
        <circle cx="95" cy="211" r="7" fill="#333" /><path d="M95 211V234" stroke="#333" strokeWidth="6" />
      </Tile>
      <Tile x={145} y={142} w={98} h={108} sx={B}>
        <path d="M156 234H214V162Z" fill={W} />
        <path d="M186 228Q208 200 232 228Q208 256 186 228Z" fill="#333" stroke={ORANGE} strokeWidth="6" /><circle cx="209" cy="228" r="8" fill={ORANGE} />
      </Tile>
      <Tile x={243} y={142} w={40} h={108} sx={B}><Sep x={261} y={182} /></Tile>
      <Tile x={283} y={142} w={97} h={108} sx={B}>
        <ellipse cx="329" cy="201" rx="35" ry="22" fill="#383838" /><Fly x={374} y={249} />
      </Tile>
      <Tile x={380} y={142} w={100} h={108} sx={B}>
        <path d="M427 160V242M392 180L462 222M462 180L392 222M414 166L427 179L440 166M414 236L427 223L440 236M393 193L408 190L405 175M461 193L446 190L449 175M393 209L408 212L405 227M461 209L446 212L449 227" stroke={W} strokeWidth="5" />
        <Fly x={473} y={249} />
      </Tile>
      <Tile x={480} y={142} w={35} h={108} sx={B}><Sep x={494} y={182} /></Tile>
      <div className="mt-[11px] flex h-[25px] w-[176px] items-center justify-between bg-[#5f5f5f] pt-[2px] pr-[9px] pl-[7px] text-[13.800px] leading-none text-[#cfcfcf]">
        All IDs
        <svg className="mb-[3px]" width="8" height="8" viewBox="0 0 8 8"><path d="M0 1H8L4 7Z" fill="#e2e2e2" /></svg>
      </div>
      <Tile x={1003} y={142} w={97} h={108} sx={B}>
        <path d="M1037 206V178M1048 206V168M1059 206V168M1070 206V176" stroke={W} strokeWidth="8" strokeLinecap="round" />
        <path d="M1033 196H1074V218L1066 242H1042L1024 208L1033 204Z" fill={W} />
      </Tile>
      <Tile x={1100} y={142} w={102} h={108} sx={B}>
        <ellipse cx="1167" cy="190" rx="23" ry="26" stroke={W} strokeWidth="8" /><path d="M1150 212L1119 242" stroke={W} strokeWidth="10" />
      </Tile>
      <Tile x={1202} y={142} w={98} h={108} sx={B}>
        <path d="M1217 212V162H1291V219H1268" stroke={W} strokeWidth="6" strokeDasharray="14 7" />
        <ellipse cx="1244" cy="207" rx="16" ry="17" stroke={TEAL} strokeWidth="6" /><path d="M1232 220L1216 241" stroke={TEAL} strokeWidth="7" />
      </Tile>
      <Tile x={1300} y={142} w={105} h={108} sx={B}>
        <path d="M1313 176V160H1328M1378 160H1393V176M1313 228V244H1328M1378 244H1393V228" stroke={W} strokeWidth="8" />
        <path d="M1351 168L1380 184V218L1351 234L1323 218V184ZM1323 184L1351 200L1380 184M1351 200V234" stroke={W} strokeWidth="4" />
        <Fly x={1398} y={249} />
      </Tile>
      <Tile x={1405} y={142} w={102} h={108} sx={B}>
        <path d="M1418 200L1424 190M1432 182C1440 166 1454 161 1468 166C1490 174 1494 200 1478 218L1469 227M1462 233L1454 241" stroke={W} strokeWidth="11" />
        <Fly x={1498} y={249} />
      </Tile>
    </div>
  );
}

/* ---------- host application behind the window ---------- */

function TopStrip() {
  return (
    <svg className="block shrink-0" width="1886" height="11" viewBox="0 0 1886 11">
      <rect width="1886" height="11" fill="#464646" />
      <rect y="6" width="1886" height="5" fill="#505050" />
      <path d="M10 5.500H1886" stroke="#606060" />
      <path d="M16 10.500H130" stroke="#2c2c2c" />
      <g fill="#5a87c7"><rect x="321" width="37" height="2" /><rect x="833" width="37" height="2" /><rect x="1434" width="37" height="2" /></g>
      <g fill="#ccc"><rect x="437" width="5" height="2" /><rect x="554" width="18" height="1" /><rect x="780" width="5" height="2" /><rect x="1095" width="5" height="2" /><rect x="1597" width="5" height="2" /><rect x="1727" width="5" height="2" /></g>
    </svg>
  );
}

function RightStrip() {
  return (
    <svg className="block shrink-0" width="18" height="1123" viewBox="1868 11 18 1123" fill="none">
      <rect x="1868" y="11" width="18" height="1123" fill="#3a3a3a" />
      <rect x="1868" y="11" width="18" height="19" fill="#505050" />
      <path d="M1868 30.500H1886M1868 56H1886" stroke="#2a2a2a" />
      <path d="M1870 63H1886M1870 1091.500H1886" stroke="#8a7426" strokeWidth="2" />
      <path d="M1868 113H1877Q1880 113 1880 118V148L1868 160Z" fill="#7a7a7a" />
      <path d="M1868 175Q1880 176 1886 168M1880 138L1886 144" stroke="#606068" strokeWidth="5" />
      <rect x="1868" y="1126" width="18" height="8" fill="#262626" />
    </svg>
  );
}

function BottomStrip() {
  return (
    <svg className="block shrink-0" width="1886" height="6" viewBox="0 0 1886 6">
      <rect width="1886" height="6" fill="#2b2b2b" />
      {Array.from({ length: 79 }, (_, i) => <rect key={i} x={83.500 + i * 22.960} y="2" width="1" height="4" fill="#666" />)}
      <rect x="80" y="2" width="8" height="4" fill="#8f8424" />
      <rect x="28" y="2" width="5" height="1" fill="#ccc" /><rect x="28" y="4" width="5" height="1" fill="#ccc" /><rect x="36" y="2" width="4" height="3" fill="#2b8c80" />
    </svg>
  );
}

export default function App() {
  return (
    <div className="flex h-[1140px] w-[1886px] flex-col overflow-hidden bg-[#444] font-['Noto_Sans',sans-serif]">
      <TopStrip />
      <div className="flex h-[1123px] shrink-0">
        <div className="w-px shrink-0 bg-[#555]" />
        <div className="flex w-[1867px] shrink-0 flex-col border-t-2 border-r-2 border-b-2 border-l-2 border-t-white border-r-[#9a9a96] border-b-[#bdbab4] border-l-[#eee] bg-[#d6d3cb] pt-[3px] pr-[2px] pb-[3px] pl-[3px]">
          <TitleBar />
          <MenuBar />
          <TopToolbar />
          <div className="flex shrink-0 border-l border-black">
            <UvCanvas />
            <SidePanel />
          </div>
          <div className="flex h-[75px] shrink-0 flex-col border-t border-l border-black">
            <div className="-mt-px flex flex-col">
              <SelectBar />
              <TransformBar />
            </div>
          </div>
        </div>
        <RightStrip />
      </div>
      <BottomStrip />
    </div>
  );
}
